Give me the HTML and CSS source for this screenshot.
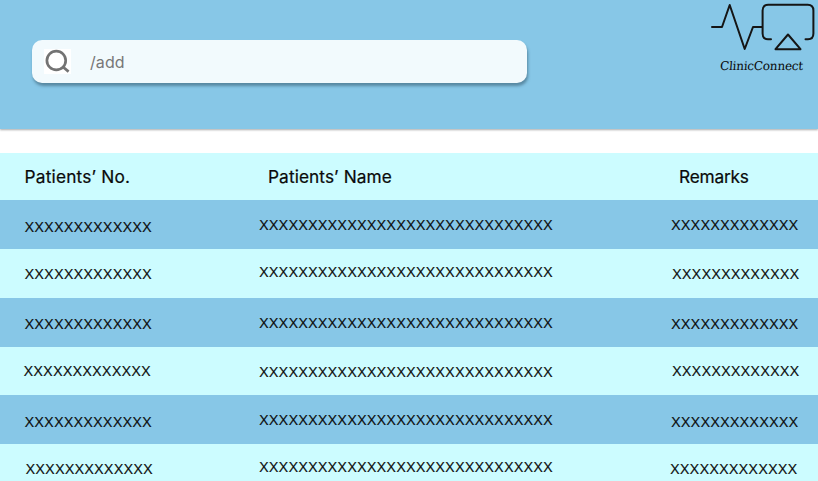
FILE: index.html
```html
<!DOCTYPE html>
<html lang="en">
<head>
<meta charset="utf-8">
<title>ClinicConnect</title>
<link rel="stylesheet" href="styles.css">
</head>
<body>
<header class="topbar">
  <label class="search">
    <span class="search-icon"><svg width="27" height="25" viewBox="0 0 27 25"><circle cx="12.3" cy="11.5" r="9.4"/><path d="M18.7 17.7L24.6 22.6"/></svg></span>
    <span class="search-text">/add</span>
  </label>
  <div class="brand">
    <svg width="108" height="54" viewBox="0 0 108 54"><path d="M2 27H12L19.7 5L34.7 49L43 27H52"/><path d="M61 39.2H58Q52.6 39.2 52.6 33.5V10.5Q52.6 4.8 58.3 4.8H97.7Q103.4 4.8 103.4 10.5V33.5Q103.4 39.2 98 39.2H95.5"/><path d="M78 34.5L90.5 49.2H65.5Z"/></svg>
    <span class="brand-name">ClinicConnect</span>
  </div>
</header>
<main class="table">
  <div class="row head"><span class="head-no">Patients’ No.</span><span class="head-name">Patients’ Name</span><span class="head-remarks">Remarks</span></div>
  <div class="row blue"><span class="low">XXXXXXXXXXXXX</span><span>XXXXXXXXXXXXXXXXXXXXXXXXXXXXXX</span><span>XXXXXXXXXXXXX</span></div>
  <div class="row pale"><span class="low">XXXXXXXXXXXXX</span><span>XXXXXXXXXXXXXXXXXXXXXXXXXXXXXX</span><span class="low right">XXXXXXXXXXXXX</span></div>
  <div class="row blue"><span class="low">XXXXXXXXXXXXX</span><span>XXXXXXXXXXXXXXXXXXXXXXXXXXXXXX</span><span class="low">XXXXXXXXXXXXX</span></div>
  <div class="row pale lower"><span class="left">XXXXXXXXXXXXX</span><span class="low">XXXXXXXXXXXXXXXXXXXXXXXXXXXXXX</span><span class="right">XXXXXXXXXXXXX</span></div>
  <div class="row blue"><span class="low">XXXXXXXXXXXXX</span><span>XXXXXXXXXXXXXXXXXXXXXXXXXXXXXX</span><span class="low">XXXXXXXXXXXXX</span></div>
  <div class="row pale"><span class="low right">XXXXXXXXXXXXX</span><span>XXXXXXXXXXXXXXXXXXXXXXXXXXXXXX</span><span class="low left">XXXXXXXXXXXXX</span></div>
</main>
</body>
</html>
```
FILE: styles.css
```css
* { box-sizing: border-box; }
body { margin: 0; height: 481px; overflow: hidden; background: #fff; color: #0a0a0a; font-family: Inter, sans-serif; }
.topbar { height: 129px; background: #87c7e7; display: flex; justify-content: space-between; align-items: flex-start; padding-left: 32px; box-shadow: 0 1px 2px #aaa; }
.search { width: 495px; height: 43px; margin-top: 40px; border-radius: 10px; background: #f2fafd; box-shadow: 1px 3px 3px rgba(50, 85, 105, .55); display: flex; align-items: center; padding-left: 12px; }
.search-icon { width: 27px; height: 25px; background: #fff; }
.search-icon svg { display: block; fill: none; stroke: #737373; stroke-width: 2.7; }
.search-text { margin-left: 19px; font-size: 16px; letter-spacing: .1px; color: #777; }
.brand { width: 108px; display: flex; flex-direction: column; }
.brand svg { fill: none; stroke: #151515; stroke-width: 2; stroke-linejoin: round; stroke-linecap: round; }
.brand-name { align-self: flex-start; margin: 4px 0 0 10px; font: 12px/16px "DejaVu Serif", serif; letter-spacing: -.2px; white-space: nowrap; transform: skewX(-5deg); }
.table { margin-top: 24px; }
.row { display: grid; grid-template-columns: 234.5px 412px 1fr; padding: 15px 0 0 25px; font: 15.3px/18px "Open Sans", sans-serif; letter-spacing: .96px; white-space: nowrap; align-items: start; -webkit-text-stroke: .2px #0a0a0a; }
.head { height: 47px; padding: 13px 0 0 24.5px; background: #ccfcff; font: 400 17.3px/22px Inter, sans-serif; letter-spacing: 0; }
.head-no { letter-spacing: .2px; }
.head-name { padding-left: 9px; letter-spacing: .08px; }
.head-remarks { padding-left: 8px; letter-spacing: -.2px; }
.blue { height: 49px; background: #87c7e7; }
.pale { height: 48.5px; padding-top: 13px; background: #ccfcff; }
.lower { padding-top: 14px; }
.low { padding-top: 1.5px; }
.right { padding-left: 1px; }
.left { margin-left: -1px; }
```
